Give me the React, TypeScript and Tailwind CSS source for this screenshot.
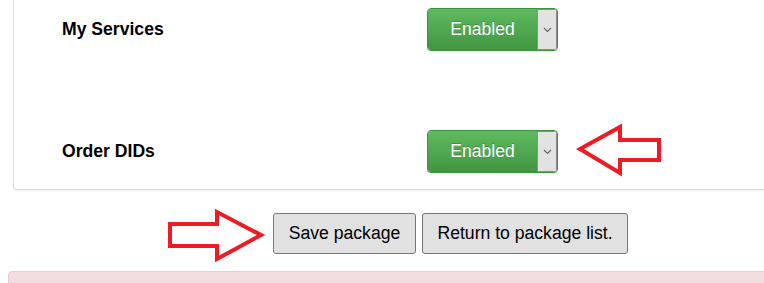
import React from 'react';

function EnabledSelect() {
  return (
    <div className="flex h-[43px] w-[131px] overflow-hidden rounded-[4px] border border-[#3e8f3e] shadow-[0_1px_1px_rgba(0,0,0,0.08)]">
      <div className="flex flex-1 items-center justify-center bg-[linear-gradient(to_bottom,#5fba5f,#419641)] text-[17.6px] text-white [text-shadow:0_-1px_0_rgba(0,0,0,0.2)]">
        Enabled
      </div>
      <div className="flex w-[20px] items-center justify-center border border-[#8c8c8c] bg-[#e2e2e2]">
        <svg width="9" height="6" viewBox="0 0 9 6">
          <path d="M1 1l3.5 3.5L8 1" fill="none" stroke="#666" strokeWidth="1.2" />
        </svg>
      </div>
    </div>
  );
}

function Row({ label }: { label: string }) {
  return (
    <div className="flex h-[43px] items-center">
      <div className="w-[365px] text-[17.6px] font-bold text-black">{label}</div>
      <EnabledSelect />
    </div>
  );
}

export default function App() {
  return (
    <div className="relative h-[283px] w-[764px] overflow-hidden bg-white font-['Liberation_Sans',Arial,sans-serif]">
      <div className="ml-[13px] w-[790px] rounded-b-[4px] border-x border-b border-[#dddddd] bg-white pb-[16px] pl-[48px] pt-[8px] shadow-[0_1px_1px_rgba(0,0,0,0.05)]">
        <Row label="My Services" />
        <div className="h-[79px]" />
        <Row label="Order DIDs" />
      </div>

      <div className="mt-[23px] flex gap-[6px] pl-[273px]">
        <button className="h-[41px] w-[143px] rounded-[3px] border border-[#767676] bg-[#e1e1e1] text-[17.6px] text-black">
          Save package
        </button>
        <button className="h-[41px] w-[206px] rounded-[3px] border border-[#767676] bg-[#e1e1e1] text-[17.6px] text-black">
          Return to package list.
        </button>
      </div>

      <div className="ml-[8px] mt-[17px] h-[40px] w-[800px] rounded-[4px] border border-[#ebccd1] bg-[#f2dede]" />

      {/* annotation arrows */}
      <svg className="pointer-events-none absolute inset-0" width="764" height="283" viewBox="0 0 764 283">
        <polygon
          points="580,149 620,127 620,140 659,140 659,160 620,160 620,173"
          fill="none"
          stroke="#ed1c24"
          strokeWidth="4"
          strokeLinejoin="miter"
        />
        <polygon
          points="170,224 217,224 217,212 261,235 217,259 217,246 170,246"
          fill="none"
          stroke="#ed1c24"
          strokeWidth="4"
          strokeLinejoin="miter"
        />
      </svg>
    </div>
  );
}
